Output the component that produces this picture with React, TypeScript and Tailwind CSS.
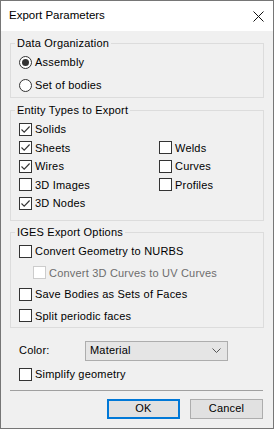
import React from "react";

const font = { fontFamily: '"Segoe UI", "Liberation Sans", Arial, sans-serif' };

function Check({ checked = false, disabled = false }: { checked?: boolean; disabled?: boolean }) {
  return (
    <span
      className={
        "flex h-[13px] w-[13px] shrink-0 items-center justify-center border bg-white " +
        (disabled ? "border-[#cccccc]" : "border-[#333333]")
      }
    >
      {checked && (
        <svg width="11" height="11" viewBox="0 0 11 11">
          <path d="M1.5 5.5 L4.2 8.2 L9.6 2.5" fill="none" stroke="#333333" strokeWidth="1.1" />
        </svg>
      )}
    </span>
  );
}

function CheckRow({
  label,
  checked,
  disabled,
  className = "",
}: {
  label: string;
  checked?: boolean;
  disabled?: boolean;
  className?: string;
}) {
  return (
    <div className={"flex items-center gap-[3px] " + className}>
      <Check checked={checked} disabled={disabled} />
      <span className={disabled ? "text-[#6d6d6d]" : "text-black"}>{label}</span>
    </div>
  );
}

function Radio({ label, checked }: { label: string; checked?: boolean }) {
  return (
    <div className="flex h-[23px] items-center gap-[3px]">
      <span className="flex h-[13px] w-[13px] shrink-0 items-center justify-center rounded-full border border-[#333333] bg-white">
        {checked && <span className="h-[7px] w-[7px] rounded-full bg-[#333333]" />}
      </span>
      <span>{label}</span>
    </div>
  );
}

function Group({
  title,
  className = "",
  children,
}: {
  title: string;
  className?: string;
  children: React.ReactNode;
}) {
  return (
    <fieldset className={"border border-[#dcdcdc] px-[8px] " + className}>
      <legend className="ml-[-4px] px-[2px] leading-[15px]">{title}</legend>
      {children}
    </fieldset>
  );
}

export default function App() {
  return (
    <div
      className="flex h-[429px] w-[274px] flex-col border border-[#767676] bg-[#f0f0f0] text-[11px] tracking-[0.2px] text-black"
      style={font}
    >
      <div className="flex h-[30px] shrink-0 items-center justify-between bg-white pl-[8px] pr-[9px] text-[11.5px] tracking-normal">
        <span>Export Parameters</span>
        <svg width="11" height="11" viewBox="0 0 11 11">
          <path d="M0.5 0.5 L10.5 10.5 M10.5 0.5 L0.5 10.5" stroke="#111111" strokeWidth="1" />
        </svg>
      </div>

      <div className="flex flex-col pl-[9px] pr-[9px]">
        <Group title="Data Organization" className="mt-[5px]">
          <Radio label="Assembly" checked />
          <Radio label="Set of bodies" />
        </Group>

        <Group title="Entity Types to Export" className="mt-[5px] pb-[7px] pt-[2px]">
          <div className="grid grid-cols-[140px_1fr] auto-rows-[18.5px]">
            <CheckRow label="Solids" checked />
            <div />
            <CheckRow label="Sheets" checked />
            <CheckRow label="Welds" />
            <CheckRow label="Wires" checked />
            <CheckRow label="Curves" />
            <CheckRow label="3D Images" />
            <CheckRow label="Profiles" />
            <CheckRow label="3D Nodes" checked />
          </div>
        </Group>

        <Group title="IGES Export Options" className="mt-[4px] pt-[1px]">
          <div className="grid auto-rows-[21.5px]">
            <CheckRow label="Convert Geometry to NURBS" />
            <CheckRow label="Convert 3D Curves to UV Curves" disabled className="pl-[14px]" />
            <CheckRow label="Save Bodies as Sets of Faces" />
            <CheckRow label="Split periodic faces" />
          </div>
        </Group>

        <div className="mt-[13px] flex h-[20px] items-center pl-[9px]">
          <span className="w-[66px]">Color:</span>
          <div className="flex h-[20px] w-[143px] items-center justify-between border border-[#adadad] bg-[#e5e5e5] pl-[4px] pr-[6px]">
            <span>Material</span>
            <svg width="9" height="5" viewBox="0 0 9 5">
              <path d="M0.5 0.5 L4.5 4.5 L8.5 0.5" fill="none" stroke="#555555" strokeWidth="1" />
            </svg>
          </div>
        </div>

        <CheckRow label="Simplify geometry" className="mt-[5px] h-[18px] pl-[9px]" />

        <div className="mt-[6px] mr-[1px] h-px bg-[#a0a0a0]" />

        <div className="mt-[8px] flex justify-end gap-[10px] pr-[1px]">
          <button className="flex h-[20px] w-[73px] items-center justify-center border-2 border-[#0078d7] bg-[#e1e1e1]">
            OK
          </button>
          <button className="flex h-[20px] w-[73px] items-center justify-center border border-[#adadad] bg-[#e1e1e1]">
            Cancel
          </button>
        </div>
      </div>
    </div>
  );
}
